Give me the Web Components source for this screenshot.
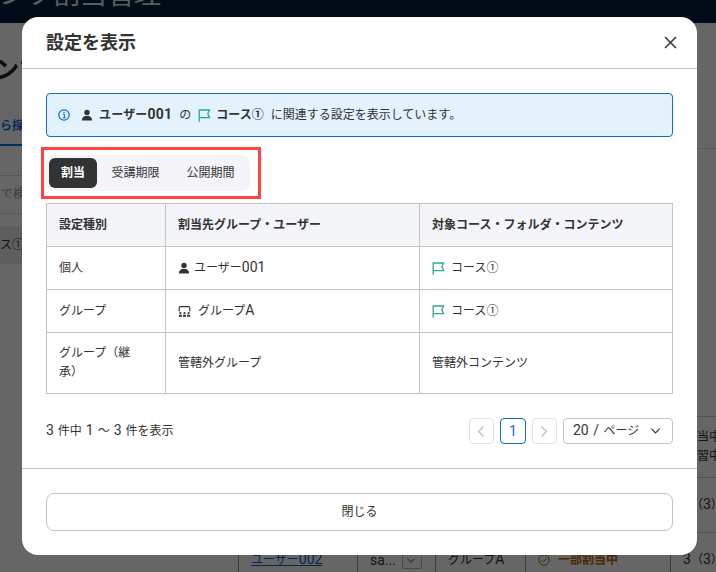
<!DOCTYPE html>
<html lang="ja">
<head>
<meta charset="utf-8">
<title>設定を表示</title>
<style>
html, body { margin: 0; padding: 0; height: 100%; }
body {
  font: 12px/19px Roboto, "Noto Sans CJK JP", sans-serif;
  color: #333;
  overflow: hidden;
  text-spacing-trim: space-all;
}
</style>
</head>
<body>
<page-behind></page-behind>
<modal-backdrop></modal-backdrop>
<settings-modal>
  <span slot="title">設定を表示</span>
  <info-alert>
    <set-icon name="info" slot="icon" style="color:#0b6bde"></set-icon>
    <set-icon name="user" style="margin-right:-2px"></set-icon>
    <b style="letter-spacing:.2px">ユーザー<num-t>001</num-t></b>
    <span>の</span>
    <set-icon name="flag" style="color:#2bab8c;margin-right:-2px"></set-icon>
    <b>コース①</b>
    <span>に関連する設定を表示しています。</span>
  </info-alert>
  <seg-tabs>
    <seg-tab active>割当</seg-tab>
    <seg-tab>受講期限</seg-tab>
    <seg-tab>公開期間</seg-tab>
  </seg-tabs>
  <settings-table>
    <table-cell head>設定種別</table-cell>
    <table-cell head>割当先グループ・ユーザー</table-cell>
    <table-cell head>対象コース・フォルダ・コンテンツ</table-cell>

    <table-cell>個人</table-cell>
    <table-cell><set-icon name="user" style="margin-right:-4px"></set-icon><span>ユーザー<num-t>001</num-t></span></table-cell>
    <table-cell><set-icon name="flag" style="color:#2bab8c;margin-right:-1px"></set-icon><span>コース①</span></table-cell>

    <table-cell>グループ</table-cell>
    <table-cell><set-icon name="group"></set-icon><span>グループ<num-t>A</num-t></span></table-cell>
    <table-cell><set-icon name="flag" style="color:#2bab8c;margin-right:-1px"></set-icon><span>コース①</span></table-cell>

    <table-cell>グループ（継承）</table-cell>
    <table-cell>管轄外グループ</table-cell>
    <table-cell>管轄外コンテンツ</table-cell>
  </settings-table>
  <pager-bar>
    <span slot="summary" style="word-spacing:.5px"><num-t>3 </num-t>件中<num-t> 1 </num-t>〜<num-t> 3 </num-t>件を表示</span>
  </pager-bar>
  <wide-button slot="footer">閉じる</wide-button>
</settings-modal>
<annotation-box></annotation-box>

<script>
// アイコン定義
const ICONS = {
  info: '<circle cx="6" cy="6" r="5.2" fill="none" stroke="currentColor" stroke-width="1.2"/><rect x="5.4" y="2.9" width="1.3" height="1.3" fill="currentColor"/><path d="M4.8 5.2H6.4V8.5H7.4M4.6 8.8H7.5" fill="none" stroke="currentColor" stroke-width="1"/>',
  user: '<circle cx="6" cy="3.4" r="2.7" fill="currentColor"/><path d="M.9 11.5C.9 8.3 3 6.8 6 6.8s5.1 1.5 5.1 4.7z" fill="currentColor"/>',
  flag: '<path d="M1.2 12.8V1H11.6L9.8 4.8 11.6 8.6H1.2" fill="none" stroke="currentColor" stroke-width="1.3"/>',
  group: '<path d="M1.2 6.6V2.6a1 1 0 0 1 1-1h8.6a1 1 0 0 1 1 1v4" fill="none" stroke="currentColor" stroke-width="1.1"/><g fill="currentColor"><circle cx="2.4" cy="8.1" r="1.1"/><circle cx="6.5" cy="8.1" r="1.1"/><circle cx="10.6" cy="8.1" r="1.1"/><rect x=".9" y="9.8" width="3" height="2"/><rect x="5" y="9.8" width="3" height="2"/><rect x="9.1" y="9.8" width="3" height="2"/></g>',
  close: '<path d="M1 1L12 12M12 1L1 12" fill="none" stroke="currentColor" stroke-width="1.5"/>',
  left: '<path d="M8.5 1.5L3.5 6.5L8.5 11.5" fill="none" stroke="currentColor" stroke-width="1.2"/>',
  right: '<path d="M3.5 1.5L8.5 6.5L3.5 11.5" fill="none" stroke="currentColor" stroke-width="1.2"/>',
  down: '<path d="M1.5 4L6 8.5L10.5 4" fill="none" stroke="currentColor" stroke-width="1.2"/>',
  check: '<circle cx="6" cy="6" r="5.2" fill="none" stroke="currentColor" stroke-width="1"/><path d="M3.4 6.1L5.3 8L8.6 4.4" fill="none" stroke="currentColor" stroke-width="1"/>',
};

// シャドウDOMを持つ要素を定義するヘルパー
function define(name, html) {
  const template = document.createElement("template");
  template.innerHTML = html;
  customElements.define(name, class extends HTMLElement {
    constructor() {
      super();
      this.attachShadow({ mode: "open" });
      this.shadowRoot.appendChild(template.content.cloneNode(true));
    }
  });
}

define("num-t", `<style>:host { display: inline; font-size: 14px; white-space: pre; }</style><slot></slot>`);

customElements.define("set-icon", class extends HTMLElement {
  connectedCallback() {
    if (this.shadowRoot) return;
    this.attachShadow({ mode: "open" });
    const size = this.getAttribute("size") || 13;
    this.shadowRoot.innerHTML = `
      <style>:host { display: inline-flex; flex: none; line-height: 0; }</style>
      <svg width="${size}" height="${size}" viewBox="0 0 13 13">${ICONS[this.getAttribute("name")]}</svg>`;
  }
});

// 背景のページ
define("page-behind", `
<style>
:host { display: block; width: 716px; height: 572px; overflow: hidden; background: #fff; }
.top { height: 23px; background: #051e3c; color: #e8e8e8; overflow: hidden; }
.top div { font-size: 27px; line-height: 27px; margin: -18px 0 0 -1px; white-space: nowrap; }
.main { display: grid; grid-template-columns: 238px 1fr; height: 549px; }
.left { overflow: hidden; min-width: 0; }
.heading { font-size: 24px; font-weight: 700; line-height: 32px; color: #222; margin: 31px 0 0 -5px; white-space: nowrap; }
.tab { font-weight: 700; line-height: 20px; color: #0b6bde; margin: 30px 0 0 0; white-space: nowrap; }
.tabline { height: 2px; width: 60px; background: #0b6bde; margin-top: 8px; }
.search { margin-top: 29px; border-top: 1px solid #ddd; border-bottom: 1px solid #ddd; height: 37px; line-height: 37px; color: #999; white-space: nowrap; padding-left: 1px; }
.rowsel { margin-top: 13px; height: 37px; line-height: 37px; background: #e6ebf1; white-space: nowrap; }
.right { min-width: 0; }
.rule { margin-top: 125px; border-top: 1px solid #ddd; height: 267px; }
.rows { display: grid; grid-template-columns: 119px 78px 90px 145px 46px; grid-template-rows: 61px 55px 55px; border-left: 1px solid #999; border-top: 1px solid #ccc; }
.rows > div { padding: 0 12px; display: flex; align-items: center; border-bottom: 1px solid #ccc; border-right: 1px solid #999; white-space: nowrap; gap: 6px; }
.rows > div.wrap { padding-left: 14px; display: block; align-self: stretch; padding-top: 11px; }
a { color: #0b5bd0; text-decoration: underline; }
.box { width: 20px; height: 18px; box-sizing: border-box; border: 1px solid #bbb; border-radius: 2px; display: flex; align-items: center; justify-content: center; flex: none; }
.warn { color: #b26a00; font-weight: 700; }
.warn set-icon { margin-right: 1px; }
</style>
<div class="top"><div>ンツ割当管理</div></div>
<div class="main">
  <div class="left">
    <div class="heading">ンツ</div>
    <div class="tab">ら探す</div>
    <div class="tabline"></div>
    <div class="search">で検索</div>
    <div class="rowsel">ス①</div>
  </div>
  <div class="right">
    <div class="rule"></div>
    <div class="rows">
      <div></div><div></div><div></div><div></div><div class="wrap">割当中<br>学習中</div>
      <div></div><div></div><div></div><div></div><div><span><num-t>3</num-t>（<num-t>3</num-t>）</span></div>
      <div><a>ユーザー<num-t>002</num-t></a></div>
      <div><num-t>sa...</num-t><span class="box"><set-icon name="down" size="11" style="color:#888"></set-icon></span></div>
      <div><span>グループ<num-t>A</num-t></span></div>
      <div class="warn"><set-icon name="check"></set-icon>一部割当中</div>
      <div><span><num-t>3</num-t>（<num-t>3</num-t>）</span></div>
    </div>
  </div>
</div>
`);

define("modal-backdrop", `
<style>:host { display: block; position: fixed; inset: 0; background: rgba(0, 0, 0, .6); }</style>
`);

define("settings-modal", `
<style>
:host {
  display: flex; flex-direction: column; position: fixed; left: 22px; top: 17px;
  width: 675px; height: 538px; box-sizing: border-box;
  background: #fff; border-radius: 16px; color: #333;
}
header {
  height: 52px; box-sizing: border-box; flex: none; padding: 0 20px 0 24px;
  display: flex; align-items: center; justify-content: space-between;
  border-bottom: 1px solid #c4c4c4;
  font-size: 18px; font-weight: 700;
}
main { flex: 1; padding: 24px; border-bottom: 1px solid #c4c4c4; }
footer { flex: none; padding: 24px; }
</style>
<header><slot name="title"></slot><set-icon name="close" size="13"></set-icon></header>
<main><slot></slot></main>
<footer><slot name="footer"></slot></footer>
`);

define("info-alert", `
<style>
:host {
  display: flex; align-items: center; height: 44px; box-sizing: border-box;
  padding: 0 11px; margin-bottom: 18px;
  background: #e3f2fd; border: 1px solid #0b6bde; border-radius: 4px;
}
.icon { display: flex; margin-right: 10px; }
.msg { display: flex; align-items: center; gap: 7px; }
</style>
<span class="icon"><slot name="icon"></slot></span>
<span class="msg"><slot></slot></span>
`);

define("seg-tabs", `
<style>
:host {
  display: inline-flex; gap: 2px; padding: 3px; height: 36px; box-sizing: border-box;
  background: #f5f5f9; border-radius: 8px; margin-bottom: 12px; vertical-align: top;
}
</style>
<slot></slot>
`);

define("seg-tab", `
<style>
:host { display: flex; align-items: center; padding: 0 12.5px; border-radius: 6px; color: #333; }
:host([active]) { padding: 0 12px; background: #333; color: #fff; font-weight: 700; }
</style>
<slot></slot>
`);

define("settings-table", `
<style>
:host {
  display: grid; grid-template-columns: 119px 254px 253px;
  grid-template-rows: 43px 43px 43px 61px; box-sizing: border-box;
  border-top: 1px solid #c4c4c4; border-left: 1px solid #c4c4c4;
  width: 627px; height: 191px;
}
</style>
<slot></slot>
`);

define("table-cell", `
<style>
:host {
  display: flex; align-items: center; gap: 7px; padding: 0 12px; box-sizing: border-box;
  border-right: 1px solid #c4c4c4; border-bottom: 1px solid #c4c4c4; min-width: 0;
}
:host([head]) { background: #f4f5f9; font-weight: 700; }
</style>
<slot></slot>
`);

define("pager-bar", `
<style>
:host { display: flex; align-items: center; justify-content: space-between; height: 26px; margin-top: 24px; }
.pages { display: flex; gap: 6px; }
.b {
  display: flex; align-items: center; justify-content: center; box-sizing: border-box;
  width: 25px; height: 26px; border: 1px solid #e4e4e4; border-radius: 4px; color: #bbb;
}
.cur { width: 26px; border-color: #0b6bde; color: #0b6bde; font-size: 14px; }
.sel {
  display: flex; align-items: center; justify-content: space-between; box-sizing: border-box;
  width: 110px; height: 26px; padding: 0 10px 0 9px; border: 1px solid #c4c4c4; border-radius: 4px;
}
.sel i { font-style: normal; font-size: 14px; white-space: pre; word-spacing: 1px; }
</style>
<slot name="summary"></slot>
<div class="pages">
  <span class="b"><set-icon name="left"></set-icon></span>
  <span class="b cur">1</span>
  <span class="b"><set-icon name="right"></set-icon></span>
  <span class="sel"><span><i>20 / </i>ページ</span><set-icon name="down" size="12"></set-icon></span>
</div>
`);

define("wide-button", `
<style>
:host {
  display: flex; align-items: center; justify-content: center; height: 38px; box-sizing: border-box;
  border: 1px solid #c4c4c4; border-radius: 8px; background: #fff;
}
</style>
<slot></slot>
`);

// 赤い注釈枠
define("annotation-box", `
<style>
:host {
  display: block; position: fixed; left: 41px; top: 147px; width: 220px; height: 52px;
  box-sizing: border-box; border: 3px solid #f44;
}
</style>
`);
</script>
</body>
</html>
